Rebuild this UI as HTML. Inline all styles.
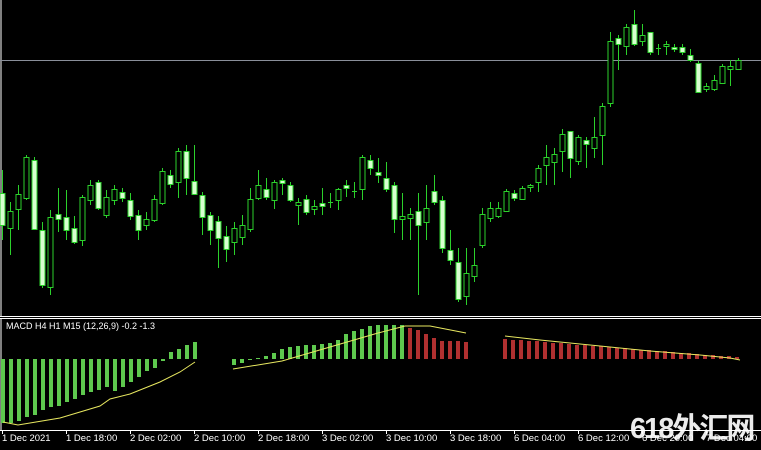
<!DOCTYPE html>
<html><head><meta charset="utf-8"><style>
html,body{margin:0;padding:0;background:#000;width:761px;height:450px;overflow:hidden;font-family:Tahoma,"Liberation Sans","DejaVu Sans",sans-serif}
.lbl{position:absolute;top:433px;color:#fff;font-size:9.5px;white-space:nowrap;line-height:12px}
#wm{position:absolute;left:630px;top:405px;font-family:"Liberation Sans","Noto Sans CJK SC",sans-serif;font-size:29px;font-weight:bold;color:rgba(255,255,255,0.92);letter-spacing:-2px;white-space:nowrap}
#mac{position:absolute;left:6px;top:321px;color:#fff;font-size:9px;white-space:nowrap}
</style></head><body>
<svg id="s" width="761" height="450" style="position:absolute;left:0;top:0">
<line x1="1" y1="0" x2="1" y2="316" stroke="#fff" stroke-width="1"/>
<line x1="0" y1="60.5" x2="761" y2="60.5" stroke="#8a8f9a"/>
<line x1="0" y1="316.5" x2="761" y2="316.5" stroke="#fff"/>
<line x1="0" y1="318.5" x2="761" y2="318.5" stroke="#fff"/>
<line x1="1" y1="318" x2="1" y2="430" stroke="#fff"/>
<line x1="0" y1="430.5" x2="761" y2="430.5" stroke="#fff"/>
<g id="g"></g>
</svg>
<div id="mac">MACD H4 H1 M15 (12,26,9) -0.2 -1.3</div>
<div class="lbl" style="left:2px">1 Dec 2021</div>
<div class="lbl" style="left:66px">1 Dec 18:00</div>
<div class="lbl" style="left:130px">2 Dec 02:00</div>
<div class="lbl" style="left:194px">2 Dec 10:00</div>
<div class="lbl" style="left:258px">2 Dec 18:00</div>
<div class="lbl" style="left:322px">3 Dec 02:00</div>
<div class="lbl" style="left:386px">3 Dec 10:00</div>
<div class="lbl" style="left:450px">3 Dec 18:00</div>
<div class="lbl" style="left:514px">6 Dec 04:00</div>
<div class="lbl" style="left:578px">6 Dec 12:00</div>
<div class="lbl" style="left:642px">6 Dec 20:00</div>
<div class="lbl" style="left:706px">7 Dec 04:00</div>
<div id="wm">618外汇网</div>
<script>
var C=[[2,170,193,225,240,1],[10,202,211,228,255,0],[18,185,194,209,230,0],[26,155,157,198,200,0],[34,157,160,229,230,1],[42,222,230,285,288,1],[50,210,217,287,295,0],[58,188,214,219,232,1],[66,190,217,230,240,1],[74,216,228,242,244,1],[82,195,197,240,246,0],[90,180,185,200,205,0],[98,180,182,208,210,1],[106,190,197,215,218,0],[114,185,189,200,205,0],[122,188,192,198,202,1],[130,193,200,216,220,1],[138,210,215,230,240,1],[146,212,219,225,230,0],[154,195,199,220,222,0],[162,168,171,203,205,0],[170,170,175,184,188,1],[178,148,151,182,198,0],[186,145,151,178,195,1],[194,145,181,194,195,1],[202,192,195,217,235,1],[210,212,215,230,245,1],[218,216,221,238,268,1],[226,226,236,249,262,1],[234,222,228,242,255,0],[242,215,225,237,245,0],[250,188,199,229,232,0],[258,170,185,198,200,0],[266,178,189,197,200,1],[274,180,182,200,209,0],[282,178,180,183,195,1],[290,182,185,200,202,1],[298,198,202,205,225,0],[306,195,199,212,215,1],[314,200,206,209,215,0],[322,188,203,206,215,1],[330,193,202,203,208,0],[338,188,189,200,210,0],[346,180,185,188,197,1],[354,182,191,191,198,0],[362,155,157,189,200,0],[370,155,160,168,175,1],[378,158,172,175,183,1],[386,162,178,189,192,1],[394,182,185,219,233,1],[402,193,216,219,240,0],[410,208,214,218,240,0],[418,193,211,225,295,1],[426,185,208,222,240,0],[434,175,191,202,205,1],[442,196,200,248,253,1],[450,230,250,260,265,1],[458,248,262,299,302,1],[466,248,273,296,305,0],[474,248,265,276,282,0],[482,208,214,245,248,0],[490,202,208,218,222,0],[498,202,208,216,218,0],[506,189,191,211,212,0],[514,190,193,198,201,1],[522,186,188,199,200,0],[530,184,185,187,192,0],[538,165,168,182,192,0],[546,145,157,165,185,0],[554,148,154,162,185,0],[562,129,134,151,172,0],[570,131,131,158,178,1],[578,135,137,161,165,0],[586,137,140,144,168,1],[594,117,137,148,158,0],[602,103,106,135,165,0],[610,32,41,103,107,0],[618,35,38,44,70,1],[626,24,27,46,55,0],[634,10,24,44,46,1],[642,24,35,41,46,0],[650,32,32,52,55,1],[658,44,48,49,55,0],[666,41,44,46,55,0],[674,44,47,49,52,1],[682,44,47,52,55,1],[690,49,55,60,62,1],[698,61,63,92,92,1],[706,83,86,89,92,0],[714,75,80,89,91,0],[722,64,66,83,84,0],[730,60,66,69,86,0],[738,58,60,69,70,0]];
var h='';
C.forEach(function(c){var x=c[0];h+='<line x1="'+(x+.5)+'" y1="'+c[1]+'" x2="'+(x+.5)+'" y2="'+c[4]+'" stroke="#2bd12b"/>';
var bh=Math.max(1,c[3]-c[2]);
if(bh<=1){h+='<line x1="'+(x-2)+'" y1="'+(c[2]+.5)+'" x2="'+(x+3)+'" y2="'+(c[2]+.5)+'" stroke="#2bd12b"/>';}
else h+='<rect x="'+(x-2)+'" y="'+(c[2]+.5)+'" width="5" height="'+bh+'" fill="'+(c[5]?'#d8ffd0':'#000')+'" stroke="#2bd12b"/>';});
var Z=359;
var L=[423,423,421,417,415,410,407,406,402,399,395,392,390,387,391,387,382,377,371,368,361,352,349,345,342];
L.forEach(function(v,i){var x=3+8*i;var a=Math.min(v,Z),b=Math.max(v,Z);h+='<rect x="'+(x-2)+'" y="'+a+'" width="4" height="'+Math.max(1,b-a)+'" fill="#5ec94e"/>';});
var M=[[234,365],[242,363],[250,360],[258,358],[266,356],[274,353],[282,349],[290,347],[298,346],[306,345],[314,345],[322,344],[330,343],[338,340],[346,334],[354,331],[362,329],[370,326],[378,325],[386,325],[394,325],[402,325]];
M.forEach(function(m){var a=Math.min(m[1],Z),b=Math.max(m[1],Z);h+='<rect x="'+(m[0]-2)+'" y="'+a+'" width="4" height="'+Math.max(1,b-a)+'" fill="#5ec94e"/>';});
var R=[[410,328],[418,330],[426,334],[434,338],[442,341],[450,341],[458,341],[466,342]];
for(var i=0;i<30;i++){var x=505+8*i;if(x>737)break;R.push([x,Math.round(339+i*0.62)]);}
R.forEach(function(m){h+='<rect x="'+(m[0]-2)+'" y="'+m[1]+'" width="4" height="'+Math.max(1,Z-m[1])+'" fill="#b03030"/>';});
h+='<polyline fill="none" stroke="#e8e860" stroke-width="1" points="3,422 18,425 60,418 100,406 110,399 130,394 160,382 180,372 195,362"/>';
h+='<polyline fill="none" stroke="#e8e860" stroke-width="1" points="233,369 282,361 330,347 378,333 405,326 430,326 466,333"/>';
h+='<polyline fill="none" stroke="#e8e860" stroke-width="1" points="505,336 540,340 600,346 650,351 700,355 730,358 740,360"/>';
[2,66,130,194,258,322,386,450,514,578,642,706].forEach(function(x){h+='<line x1="'+(x+.5)+'" y1="431" x2="'+(x+.5)+'" y2="434" stroke="#fff"/>';});
document.getElementById('g').innerHTML=h;
</script>
</body></html>
